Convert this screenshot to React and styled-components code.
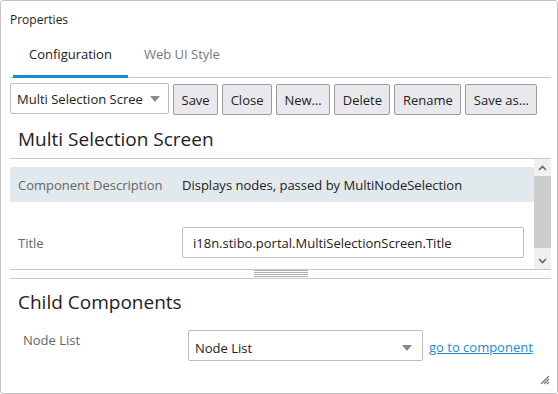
import React from 'react';
import styled, { createGlobalStyle } from 'styled-components';

const GlobalStyle = createGlobalStyle`
  html, body {
    margin: 0;
    padding: 0;
    background: #fff;
  }
  body {
    font-family: "Open Sans", "Noto Sans", sans-serif;
    color: #222;
  }
  * { box-sizing: border-box; }
`;

const Panel = styled.div`
  position: relative;
  width: 558px;
  height: 394px;
  border: 1px solid #c3c3c3;
  border-radius: 3px;
  padding: 0 6px 0 9px;
  display: flex;
  flex-direction: column;
  overflow: hidden;
`;

const PanelTitle = styled.div`
  height: 36px;
  display: flex;
  align-items: center;
  font-size: 12px;
  color: #222;
`;

const TabBar = styled.div`
  display: flex;
  height: 41px;
  padding-left: 3px;
  border-bottom: 1px solid #c8c8c8;
`;

const Tab = styled.div`
  display: flex;
  align-items: center;
  padding: 0 16px 4px;
  font-size: 13px;
  color: ${p => (p.active ? '#222' : '#777')};
  border-bottom: 3px solid ${p => (p.active ? '#1a8ad4' : 'transparent')};
  margin-bottom: -1px;
`;

const Toolbar = styled.div`
  display: flex;
  align-items: stretch;
  gap: 4px;
  height: 31px;
  margin-top: 5px;
`;

const Select = styled.div`
  display: flex;
  align-items: center;
  justify-content: space-between;
  width: ${p => p.width}px;
  height: 31px;
  padding: 0 8px 0 6px;
  border: 1px solid #bdbdbd;
  border-radius: 2px;
  background: #fff;
  font-size: 13px;
  color: #222;
  white-space: nowrap;
  overflow: hidden;
`;

const Caret = styled.span`
  width: 0;
  height: 0;
  border-left: 5px solid transparent;
  border-right: 5px solid transparent;
  border-top: 6px solid #8a8a8a;
  margin-left: 6px;
  flex-shrink: 0;
`;

const Button = styled.button`
  font-family: inherit;
  font-size: 13px;
  color: #222;
  height: 31px;
  padding: 0 7.5px;
  background: #e9e9ed;
  border: 1px solid #9c9c9c;
  border-radius: 2px;
  margin-top: 1px;
  cursor: pointer;
`;

const SectionHeading = styled.div`
  display: flex;
  align-items: center;
  height: ${p => p.height}px;
  padding: ${p => p.pad || '0 0 0 8px'};
  font-size: 19px;
  color: #222;
  border-bottom: ${p => (p.line ? '1px solid #c8c8c8' : 'none')};
`;

const ScrollPane = styled.div`
  display: flex;
  height: 111px;
  border-bottom: 1px solid #c8c8c8;
`;

const ScrollContent = styled.div`
  flex: 1;
  padding-top: 8px;
  overflow: hidden;
`;

const PropRow = styled.div`
  display: flex;
  align-items: center;
  height: ${p => p.height}px;
  background: ${p => (p.shaded ? '#e1e9ec' : 'transparent')};
  margin-top: ${p => p.gap || 0}px;
  padding-left: 8px;
`;

const PropLabel = styled.div`
  width: 164px;
  flex-shrink: 0;
  font-size: 13px;
  color: #666;
`;

const PropValue = styled.div`
  font-size: 13px;
  color: #222;
`;

const TextInput = styled.div`
  width: 342px;
  height: 31px;
  display: flex;
  align-items: center;
  padding-left: 10px;
  border: 1px solid #bdbdbd;
  border-radius: 2px;
  font-size: 13px;
  color: #222;
`;

const Scrollbar = styled.div`
  width: 17px;
  background: #f0f0f0;
  display: flex;
  flex-direction: column;
`;

const ScrollArrow = styled.div`
  height: 17px;
  display: flex;
  align-items: center;
  justify-content: center;
`;

const ScrollThumb = styled.div`
  flex: 1;
  background: #cdcdcd;
  margin-bottom: 4px;
`;

const Splitter = styled.div`
  height: 9px;
  display: flex;
  justify-content: center;
  border-bottom: 1px solid #c8c8c8;
`;

const Grip = styled.div`
  width: 54px;
  height: 8px;
  background: repeating-linear-gradient(
    to bottom,
    #b0b0b0 0,
    #b0b0b0 1px,
    transparent 1px,
    transparent 2px
  );
`;

const ChildRow = styled.div`
  display: flex;
  align-items: flex-start;
  padding-left: 13px;
  margin-top: 5px;
`;

const ChildLabel = styled.div`
  width: 165px;
  font-size: 13px;
  color: #666;
  padding-top: 1px;
`;

const ChildSelect = styled(Select)`
  padding-top: 4px;
  padding-right: 10px;
`;

const Link = styled.a`
  font-size: 13px;
  color: #1a8ad4;
  text-decoration: underline;
  margin-left: 6px;
  margin-top: 8px;
  cursor: pointer;
`;

const ResizeGrip = styled.svg`
  position: absolute;
  right: 7px;
  bottom: 8px;
`;

function Chevron({ up }) {
  return (
    <svg width="9" height="6" viewBox="0 0 9 6">
      <path
        d={up ? 'M1 5 L4.5 1.5 L8 5' : 'M1 1 L4.5 4.5 L8 1'}
        fill="none"
        stroke="#666"
        strokeWidth="1.6"
      />
    </svg>
  );
}

export default function App() {
  return (
    <>
      <GlobalStyle />
      <Panel>
        <PanelTitle>Properties</PanelTitle>
        <TabBar>
          <Tab active>Configuration</Tab>
          <Tab>Web UI Style</Tab>
        </TabBar>
        <Toolbar>
          <Select width={159}>
            Multi Selection Scree
            <Caret />
          </Select>
          <Button>Save</Button>
          <Button>Close</Button>
          <Button>New…</Button>
          <Button>Delete</Button>
          <Button>Rename</Button>
          <Button>Save as…</Button>
        </Toolbar>
        <SectionHeading height={45} line pad="5px 0 0 8px">
          Multi Selection Screen
        </SectionHeading>
        <ScrollPane>
          <ScrollContent>
            <PropRow shaded height={35}>
              <PropLabel>Component Description</PropLabel>
              <PropValue>Displays nodes, passed by MultiNodeSelection</PropValue>
            </PropRow>
            <PropRow height={31} gap={25}>
              <PropLabel>Title</PropLabel>
              <TextInput>i18n.stibo.portal.MultiSelectionScreen.Title</TextInput>
            </PropRow>
          </ScrollContent>
          <Scrollbar>
            <ScrollArrow>
              <Chevron up />
            </ScrollArrow>
            <ScrollThumb />
            <ScrollArrow>
              <Chevron />
            </ScrollArrow>
          </Scrollbar>
        </ScrollPane>
        <Splitter>
          <Grip />
        </Splitter>
        <SectionHeading height={46}>
          Child Components
        </SectionHeading>
        <ChildRow>
          <ChildLabel>Node List</ChildLabel>
          <ChildSelect width={235}>
            Node List
            <Caret />
          </ChildSelect>
          <Link>go to component</Link>
        </ChildRow>
        <ResizeGrip width="12" height="12" viewBox="0 0 12 12">
          <path d="M11 3 L3 11 M11 6 L6 11 M11 9 L9 11" stroke="#777" strokeWidth="1.2" />
        </ResizeGrip>
      </Panel>
    </>
  );
}
